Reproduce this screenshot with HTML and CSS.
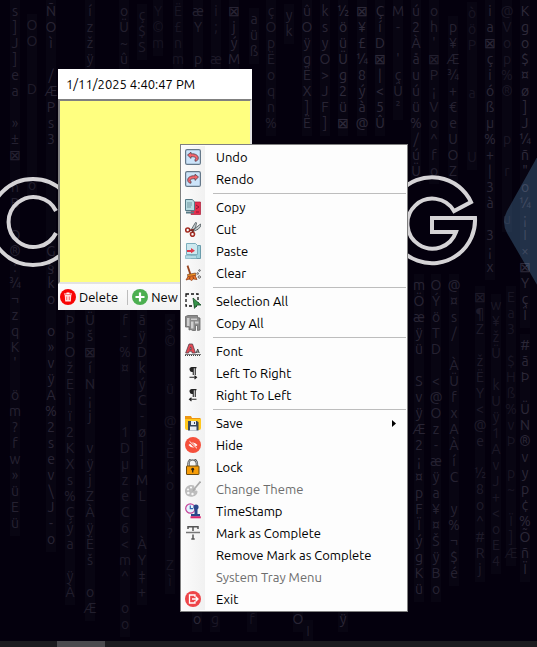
FILE: index.html
```html
<!DOCTYPE html>
<html lang="en">
<head>
<meta charset="utf-8">
<title>Sticky note</title>
<link rel="stylesheet" href="styles.css">
</head>
<body>
<main class="desktop">
  <svg class="wallpaper" aria-hidden="true">
    <path class="hexagon" d="M540 152 507 211Q501 222 507 233L540 290Z"/>
    <g id="rain" class="rain"></g>
    <g class="logo">
      <circle cx="33" cy="222" r="43"/>
      <path d="M56 211A25 25 0 1 0 56 233"/>
      <path d="M471 202A43 43 0 1 0 475 218H432V232H456A25 25 0 1 1 454 211Z"/>
    </g>
  </svg>

  <section class="note">
    <header class="note-title">1/11/2025 4:40:47 PM</header>
    <textarea class="note-text" aria-label="Note text"></textarea>
    <footer class="note-bar">
      <button class="tool"><svg class="icon" viewBox="0 0 16 16"><circle cx="8" cy="8" r="8" fill="#f80505"/><path d="M4 5h8M6.500 4h3" stroke="#fff" stroke-width="1.200"/><path d="M4.700 6h6.600l-.5 6.500H5.200z" fill="#ffe1e1"/><path d="M6.700 7.500v3.500M9.300 7.500v3.500" stroke="#f66" /></svg>Delete</button>
      <span class="divider"></span>
      <button class="tool"><svg class="icon" viewBox="0 0 16 16"><circle cx="8" cy="8" r="8" fill="#4caf50"/><path d="M8 3.500v9M3.500 8h9" stroke="#fff" stroke-width="2.200"/></svg>New</button>
    </footer>
  </section>

  <nav class="menu" aria-label="Note menu">
    <div class="group">
      <button class="item"><svg class="icon" viewBox="0 0 16 16"><rect x=".6" y=".6" width="14.800" height="14.800" rx="1.500" fill="#cce4fa" stroke="#65788a" stroke-width="1.200"/><path d="M2.500 6 6 3.200v1.600c4.500-.3 7.300 1.500 7.300 4.200 0 2-1.300 3.200-3.300 3.200v-2c1.300-.2 1.700-2.700-4-2.500v1.700z" fill="#f4636b" stroke="#54404c" stroke-width=".8"/></svg>Undo</button>
      <button class="item"><svg class="icon" viewBox="0 0 16 16"><rect x=".6" y=".6" width="14.800" height="14.800" rx="1.500" fill="#cce4fa" stroke="#65788a" stroke-width="1.200"/><path d="M13.500 6 10 3.200v1.600C5.500 4.500 2.700 6.300 2.700 9c0 2 1.300 3.200 3.300 3.200v-2C4.700 10 4.300 7.500 10 7.700v1.700z" fill="#f4636b" stroke="#54404c" stroke-width=".8"/></svg>Rendo</button>
    </div>
    <div class="group">
      <button class="item"><svg class="icon" viewBox="0 0 16 16"><path d="M7 3h8.500v12.500H6z" fill="#e72d4c" stroke="#a91e3a" stroke-width=".7"/><path d="M.5.500h6.700l2.300 2.300v8.700h-9z" fill="#b8dce2" stroke="#557985"/><path d="M2 4h5M2 6h5M2 8h4" stroke="#7397a1"/><path d="M1 12.500h8v2H1z" fill="#557985"/><path d="m11 6 3 2-3 2M11 13h3" fill="none" stroke="#8e1735"/></svg>Copy</button>
      <button class="item"><svg class="icon" viewBox="0 0 16 16"><path d="m6 9 4.500-7.500 1 .3-.8 4.200-2.500 4zM7.500 9.500 15.500 3l.3 2.200-2.600 3-5 2.300z" fill="#c4cdcf" stroke="#485257" stroke-width=".8"/><circle cx="2.700" cy="9" r="2" fill="none" stroke="#a42c22" stroke-width="1.600"/><circle cx="7.500" cy="13.300" r="2" fill="none" stroke="#a42c22" stroke-width="1.600"/><path d="m4.500 9.500 3.500-.8-.5 3" fill="none" stroke="#7d2821" stroke-width="1.600"/></svg>Cut</button>
      <button class="item"><svg class="icon" viewBox="0 0 16 16"><path d="M7 2.500h8.500v13H6z" fill="#9dd2de" stroke="#6b9cab"/><path d="M1.500.500h9l2 2v9h-11z" fill="#cce8ef" stroke="#7caebd"/><path d="M.5 12.500h11v3H.5z" fill="#b3dbe5" stroke="#7caebd" stroke-width=".7"/><path d="M2 7h4V5l4 2.700-4 2.600V9H2z" fill="#df3949"/></svg>Paste</button>
      <button class="item"><svg class="icon" viewBox="0 0 16 16"><path d="m2.500.6 3 9" stroke="#974521" stroke-width="1.800"/><path d="m2.500 9.500 8-1.500.5 2.500-8 2z" fill="#f39322" stroke="#774125" stroke-width=".7"/><path d="m3 11.500 7-1 2 4-3.500-.5-2 1.500-2-1.500-3.500 1z" fill="#ed7827" stroke="#93431d" stroke-width=".8"/><path d="m5 12-.5 2.500M8 11.500l.5 2.500" stroke="#8a3b19"/><g fill="none" stroke="#606060"><circle cx="14.500" cy="5.500" r=".8"/><circle cx="12.700" cy="8.500" r=".8"/><circle cx="14.300" cy="12" r="1.200"/></g></svg>Clear</button>
    </div>
    <div class="group">
      <button class="item"><svg class="icon" viewBox="0 0 16 16"><rect x="1" y="1" width="12" height="12" fill="none" stroke="#111" stroke-width="1.300" stroke-dasharray="3 2"/><path d="m8 5 8 7-4 .1-2.500 3.300z" fill="#369449" stroke="#164d26" stroke-width=".8"/></svg>Selection All</button>
      <button class="item"><svg class="icon" viewBox="0 0 16 16"><path d="M.5 1.500 3 .5h9.500v2l2.500.5v12l-2.500.5v-5h-2v5h-3L6 14.500l-2 .5v-3H.5z" fill="#8b8b8b" stroke="#666" stroke-width=".8"/><path d="M2 3h2.500v8H2zM6 3.500h6v1.500H6zM6 6.500h2.500v7H6zM10 6.500h3.500v2H10z" fill="#cfcfcf"/></svg>Copy All</button>
    </div>
    <div class="group">
      <button class="item"><svg class="icon" viewBox="0 0 16 16"><path fill-rule="evenodd" d="M4 1h3.500l3 9H7.200l-.5-1.800H4.200L3.600 10H.7zM5.700 3.800 4.800 6.500h1.600z" fill="#e74b54" stroke="#54404c" stroke-width=".8"/><path d="m11.200 10 1.500-4 1.500 4M11.800 9h2" fill="none" stroke="#444"/><path d="M0 11.500h16" stroke="#777"/><path d="M0 12.500h16" stroke="#444" stroke-dasharray="1 1"/></svg>Font</button>
      <button class="item"><svg class="icon" viewBox="0 0 16 16"><path d="M6.500 2h5v1.300h-.7V10H9.700V3.300h-.9V10H7.700V7A2.500 2.500 0 0 1 6.500 2z" fill="#222"/><path d="M4.500 12.300h7M9.500 10.700l2 1.600-2 1.700" fill="none" stroke="#222" stroke-width="1.100"/></svg>Left To Right</button>
      <button class="item"><svg class="icon" viewBox="0 0 16 16"><path d="M6.500 2h5v1.300h-.7V10H9.700V3.300h-.9V10H7.700V7A2.500 2.500 0 0 1 6.500 2z" fill="#222"/><path d="M4.500 12.300h7M6.500 10.700l-2 1.600 2 1.700" fill="none" stroke="#222" stroke-width="1.100"/></svg>Right To Left</button>
    </div>
    <div class="group">
      <button class="item" aria-haspopup="true"><svg class="icon" viewBox="0 0 16 16"><path d="M0 1h6l1 2h8.500v3H0z" fill="#ed9712"/><path d="M0 4h16v9q0 2-2 2H2q-2 0-2-2z" fill="#ffc71d"/><path d="M3 6h9l1.500 1.500v8H3z" fill="#38465b"/><path d="M6 6h5v4H6zM5 11.500h6.500v4H5z" fill="#e7edf4"/><path d="M9 7h1v2H9z" fill="#38465b"/></svg>Save<svg class="arrow" viewBox="0 0 4 7"><path d="m0 0 4 3.500L0 7z"/></svg></button>
      <button class="item"><svg class="icon" viewBox="0 0 16 16"><circle cx="8" cy="8" r="8" fill="#f5503c"/><path d="M3.500 8q4.500-5 9 0-4.500 5-9 0z" fill="#fff"/><circle cx="8" cy="8" r="1.400" fill="#f5503c"/><path d="m4 4.500 8 7" stroke="#f5503c" stroke-width="2"/><path d="m4.500 4.300 7.500 7" stroke="#fff" stroke-width=".9"/></svg>Hide</button>
      <button class="item"><svg class="icon" viewBox="0 0 16 16"><path d="M3.500 8V4.500a4.200 4.200 0 0 1 8.400 0V8" fill="none" stroke="#555" stroke-width="2.400"/><path d="M3.500 8V4.500a4.200 4.200 0 0 1 8.400 0V8" fill="none" stroke="#c0c6c9" stroke-width=".9"/><rect x="1.500" y="7" width="12.500" height="8.500" rx=".5" fill="#f79d08" stroke="#6a4a13"/><circle cx="7.700" cy="10.200" r="1.400" fill="#302515"/><path d="M7.700 10v3.500" stroke="#302515" stroke-width="1.300"/></svg>Lock</button>
      <button class="item" disabled><svg class="icon" viewBox="0 0 16 16"><path d="M6.500 4C2.500 4 0 6.700 0 10c0 3.500 2.500 5.700 6 5.700 3.800 0 6.500-2.200 6.500-5 0-1.700-2-.7-3-1.700C8.300 7.500 11.500 4 6.500 4z" fill="#bdbdbd"/><g fill="#f7f7f7"><circle cx="3" cy="8.500" r="1.100"/><circle cx="6" cy="6.500" r="1.100"/><circle cx="3.300" cy="12" r="1.300"/><circle cx="7.500" cy="13" r="1.200"/></g><path d="m8 9.500 7.500-9" stroke="#aaa" stroke-width="1.700"/><path d="m7 11 2.500-4 1.500 1.500z" fill="#aaa"/></svg>Change Theme</button>
      <button class="item"><svg class="icon" viewBox="0 0 16 16"><circle cx="5.300" cy="5.500" r="4.600" fill="#e4f4ff" stroke="#c54498" stroke-width="1.200"/><path d="M5.300 2.500v3.200H8" fill="none" stroke="#3266b2" stroke-width="1.200"/><circle cx="11" cy="4" r="2.600" fill="#29478a"/><path d="M9.500 5h3v6H15v2.500H6V11h3.500z" fill="#29478a"/><path d="M5.500 14.300h10.300" stroke="#df246f" stroke-width="2"/></svg>TimeStamp</button>
      <button class="item"><svg class="icon" viewBox="0 0 16 16"><path d="M3 4V1.700h10V4M8 1.700V6M8 9.500V14M6.300 14h3.400" fill="none" stroke="#555" stroke-width="1.500"/><path d="M1 7.500h14" stroke="#777" stroke-width="1.500"/></svg>Mark as Complete</button>
      <button class="item"><span class="icon"></span>Remove Mark as Complete</button>
      <button class="item" disabled><span class="icon"></span>System Tray Menu</button>
      <button class="item"><svg class="icon" viewBox="0 0 16 16"><circle cx="8" cy="8" r="8" fill="#ee4549"/><path d="M10 6V4H4.500v8H10v-2" fill="none" stroke="#fff" stroke-width="1.300"/><path d="M7 8h6M10.700 5.700 13 8l-2.300 2.300" fill="none" stroke="#fff" stroke-width="1.300"/></svg>Exit</button>
    </div>
  </nav>
  <footer class="taskbar"><span class="task"></span></footer>
</main>
<script src="rain.js"></script>
</body>
</html>
```
FILE: styles.css
```css
* { box-sizing: border-box; }
body {
  margin: 0;
  font-family: Ubuntu, "Noto Sans", sans-serif;
  font-size: 13px;
  color: #000;
}
button { font: inherit; color: inherit; border: 0; background: none; padding: 0; text-align: left; }
.desktop {
  position: relative;
  min-height: 100vh;
  background: #04000d;
  overflow: hidden;
  display: flex;
  flex-direction: column;
  justify-content: flex-end;
}
.wallpaper { position: absolute; inset: 0; width: 100%; height: 100%; }
.hexagon { fill: #1f2e45; }
.rain { font-size: 14px; fill: #9a93ab; text-anchor: middle; }
.glow { opacity: .035; }
.logo { fill: none; stroke: #d5d3d6; stroke-width: 4; }
.note {
  position: absolute;
  left: 58px;
  top: 69px;
  width: 194px;
  display: flex;
  flex-direction: column;
  background: #fff;
}
.note-title { padding: 0 8px; line-height: 30px; }
.note-text {
  display: block;
  width: 100%;
  height: 185px;
  margin: 0;
  resize: none;
  border: 2px solid;
  border-color: #808080 #e3e3e3 #e3e3e3 #808080;
  border-radius: 0;
  background: #ffff80;
  outline: 0;
}
.note-bar {
  display: flex;
  align-items: center;
  height: 26px;
  padding: 0 2px;
  background: linear-gradient(#fcfcfc, #f2f2f2);
}
.tool { display: flex; align-items: center; gap: 3px; }
.divider { width: 1px; height: 15px; margin: 0 4px 0 9px; background: #bdbdbd; }
.icon { display: block; width: 16px; height: 16px; flex: none; }
.menu {
  position: absolute;
  left: 180px;
  top: 144px;
  width: 228px;
  padding: 1px;
  border: 1px solid #808080;
  background: linear-gradient(90deg, #fbfbfb, #f1f1f1) 1px 1px / 23px calc(100% - 2px) no-repeat #fdfdfd;
}
.group + .group::before {
  content: "";
  display: block;
  height: 1px;
  margin: 3px 0 2px 31px;
  background: #bdbdbd;
}
.item {
  display: flex;
  align-items: center;
  gap: 15px;
  width: 100%;
  height: 22px;
  padding: 0 10px 0 3px;
}
.item:disabled { color: #6d6d6d; }
.arrow { width: 4px; height: 7px; margin-left: auto; }
.taskbar { position: relative; display: flex; height: 6px; padding-left: 57px; background: #1c1b1f; }
.task { width: 48px; background: #4b4a4e; }
```
FILE: rain.js
```js
// Each column: centre x, first baseline, opacity, glyphs from top to bottom.
const columns = [
  [15, 16, .20, "s]J]ea »±⊠ hB O®:¾¬zqK' öm?fw»üEü"],
  [32, 30, .16, "OO  D     o"],
  [51, 16, .22, "ÑOì /ÆPs3      G§ko o»vÿA%2sev\\J-o"],
  [70, 325, .17, "ÞÞOžEìï2KXs%Çýa ÿÀ"],
  [90, 16, .19, "ízžÿ"],
  [90, 325, .18, "Üš⊠íN¡j vÿjZÀÿËš oÆ"],
  [124, 16, .18, "oÜ~û"],
  [142, 20, .14, "ç$S"],
  [125, 325, .15, "f-%¤   1DµzeC6<m^ oo"],
  [142, 325, .17, "ãÿDkýC-ø]IML  ÀY‡+"],
  [158, 16, .09, "Y©m"],
  [178, 16, .11, "Ë£nm"],
  [198, 16, .19, "æY p"],
  [216, 16, .14, "i; æ"],
  [234, 16, .22, "⊠jýM"],
  [254, 24, .19, "aüß"],
  [271, 16, .16, "çOpËoqn%"],
  [289, 20, .19, "yk"],
  [307, 16, .22, "ûOÿgËX]Ë"],
  [325, 16, .22, "ksyO>JF]"],
  [343, 16, .26, "½öüÜg2ü⊠"],
  [362, 16, .25, "⊠¥£¼8ýà@"],
  [380, 16, .25, "ÇíD⊠|<5Û"],
  [398, 16, .20, "M- 'çÜ²"],
  [416, 16, .22, "ú2Àåuúü%/úÜ"],
  [434, 16, .18, "oh'⊠P¡Vo^fo"],
  [453, 32, .20, "p¥Æ¾+€eUOZ"],
  [472, 18, .10, "òöP  a   U"],
  [490, 16, .23, "ia⊠çióßµ%+|3à 3¡x"],
  [507, 16, .12, "@Vop%®  p r  u"],
  [525, 16, .26, "Kgo$¤ø]J¼ñ\"o¼¡I×⊠YçÏ"],
  [419, 290, .22, "mÖæÿü SvÿÆ2¡¤pFÏýgKü"],
  [436, 290, .20, "OÝöTD <@Oz-æÿa¥¤ŠÿBo"],
  [454, 290, .20, "@¤s/ ÀÜfxAÀíC y%¬$é"],
  [480, 302, .15, "⊠¶Z žËY<@e ½8o^#Rj"],
  [496, 310, .13, "w¥žÜ kUÿ1AvJ+<oE4"],
  [511, 302, .11, "Ea3 $Hß%vÞ p~ Ï]Æ"],
  [525, 350, .24, "#ãÞ ÜN®vyp¢%ÕñÏ"],
  [170, 330, .10, "$©  ü @¿Eko Y? Zì"],
  [197, 624, .24, "o"],
  [298, 624, .22, "O"],
  [308, 636, .16, "I"],
  [343, 624, .23, "ÿ"],
  [215, 624, .12, "g"],
  [252, 624, .11, "f"]
];
const ns = "http://www.w3.org/2000/svg";
const rain = document.getElementById("rain");
for (const [x, top, opacity, glyphs] of columns) {
  const glow = document.createElementNS(ns, "rect");
  glow.setAttribute("class", "glow");
  glow.setAttribute("x", x - 5);
  glow.setAttribute("y", top - 16);
  glow.setAttribute("width", 10);
  glow.setAttribute("height", glyphs.length * 16 + 8);
  rain.append(glow);

  const text = document.createElementNS(ns, "text");
  text.setAttribute("opacity", opacity);
  [...glyphs].forEach((glyph, i) => {
    if (glyph === " ") return;
    const span = document.createElementNS(ns, "tspan");
    span.setAttribute("x", x);
    span.setAttribute("y", top + i * 16);
    span.textContent = glyph;
    text.append(span);
  });
  rain.append(text);
}
```
